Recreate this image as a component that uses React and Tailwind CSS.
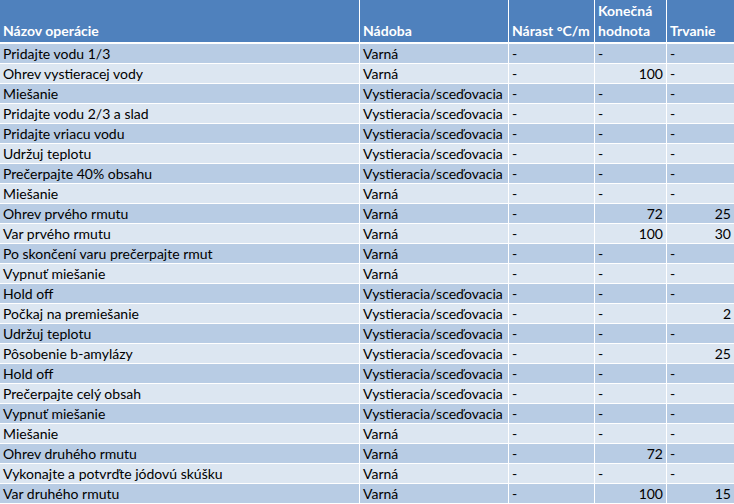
import React from 'react';

const ROWS = [
  ['Pridajte vodu 1/3', 'Varná', '-', '-', '-'],
  ['Ohrev vystieracej vody', 'Varná', '-', '100', '-'],
  ['Miešanie', 'Vystieracia/sceďovacia', '-', '-', '-'],
  ['Pridajte vodu 2/3 a slad', 'Vystieracia/sceďovacia', '-', '-', '-'],
  ['Pridajte vriacu vodu', 'Vystieracia/sceďovacia', '-', '-', '-'],
  ['Udržuj teplotu', 'Vystieracia/sceďovacia', '-', '-', '-'],
  ['Prečerpajte 40% obsahu', 'Vystieracia/sceďovacia', '-', '-', '-'],
  ['Miešanie', 'Varná', '-', '-', '-'],
  ['Ohrev prvého rmutu', 'Varná', '-', '72', '25'],
  ['Var prvého rmutu', 'Varná', '-', '100', '30'],
  ['Po skončení varu prečerpajte rmut', 'Varná', '-', '-', '-'],
  ['Vypnuť miešanie', 'Varná', '-', '-', '-'],
  ['Hold off', 'Vystieracia/sceďovacia', '-', '-', '-'],
  ['Počkaj na premiešanie', 'Vystieracia/sceďovacia', '-', '-', '2'],
  ['Udržuj teplotu', 'Vystieracia/sceďovacia', '-', '-', '-'],
  ['Pôsobenie b-amylázy', 'Vystieracia/sceďovacia', '-', '-', '25'],
  ['Hold off', 'Vystieracia/sceďovacia', '-', '-', '-'],
  ['Prečerpajte celý obsah', 'Vystieracia/sceďovacia', '-', '-', '-'],
  ['Vypnuť miešanie', 'Vystieracia/sceďovacia', '-', '-', '-'],
  ['Miešanie', 'Varná', '-', '-', '-'],
  ['Ohrev druhého rmutu', 'Varná', '-', '72', '-'],
  ['Vykonajte a potvrďte jódovú skúšku', 'Varná', '-', '-', '-'],
  ['Var druhého rmutu', 'Varná', '-', '100', '15'],
];

// column widths measured off the sheet, 1px white gridline between
const GRID = 'grid grid-cols-[359px_148px_85px_71px_1fr] gap-x-px';

const Cell = ({ value, dark }) => {
  const isNum = /^\d+$/.test(value);
  return (
    <div
      className={`${dark ? 'bg-[#b8cce4]' : 'bg-[#dce6f1]'} px-[3px] pt-px leading-[18px] whitespace-nowrap overflow-hidden ${isNum ? 'text-right' : 'text-left'}`}
    >
      {value}
    </div>
  );
};

export default function App() {
  return (
    <div
      className="w-[734px] h-[504px] overflow-hidden bg-white text-[14px] text-black"
      style={{ fontFamily: 'Lato, "Noto Sans", sans-serif' }}
    >
      <div className={`${GRID} h-[42px] mb-[2px] font-bold text-white leading-[20px]`}>
        <div className="bg-[#4f81bd] px-[3px] pb-px flex items-end">Názov operácie</div>
        <div className="bg-[#4f81bd] px-[3px] pb-px flex items-end">Nádoba</div>
        <div className="bg-[#4f81bd] px-[3px] pb-px flex items-end whitespace-nowrap">Nárast °C/m</div>
        <div className="bg-[#4f81bd] px-[3px] pb-px flex items-end">Konečná hodnota</div>
        <div className="bg-[#4f81bd] px-[3px] pb-px flex items-end">Trvanie</div>
      </div>
      {ROWS.map((row, i) => (
        <div key={i} className={`${GRID} h-[19px] mb-px`}>
          {row.map((v, j) => (
            <Cell key={j} value={v} dark={i % 2 === 0} />
          ))}
        </div>
      ))}
    </div>
  );
}
